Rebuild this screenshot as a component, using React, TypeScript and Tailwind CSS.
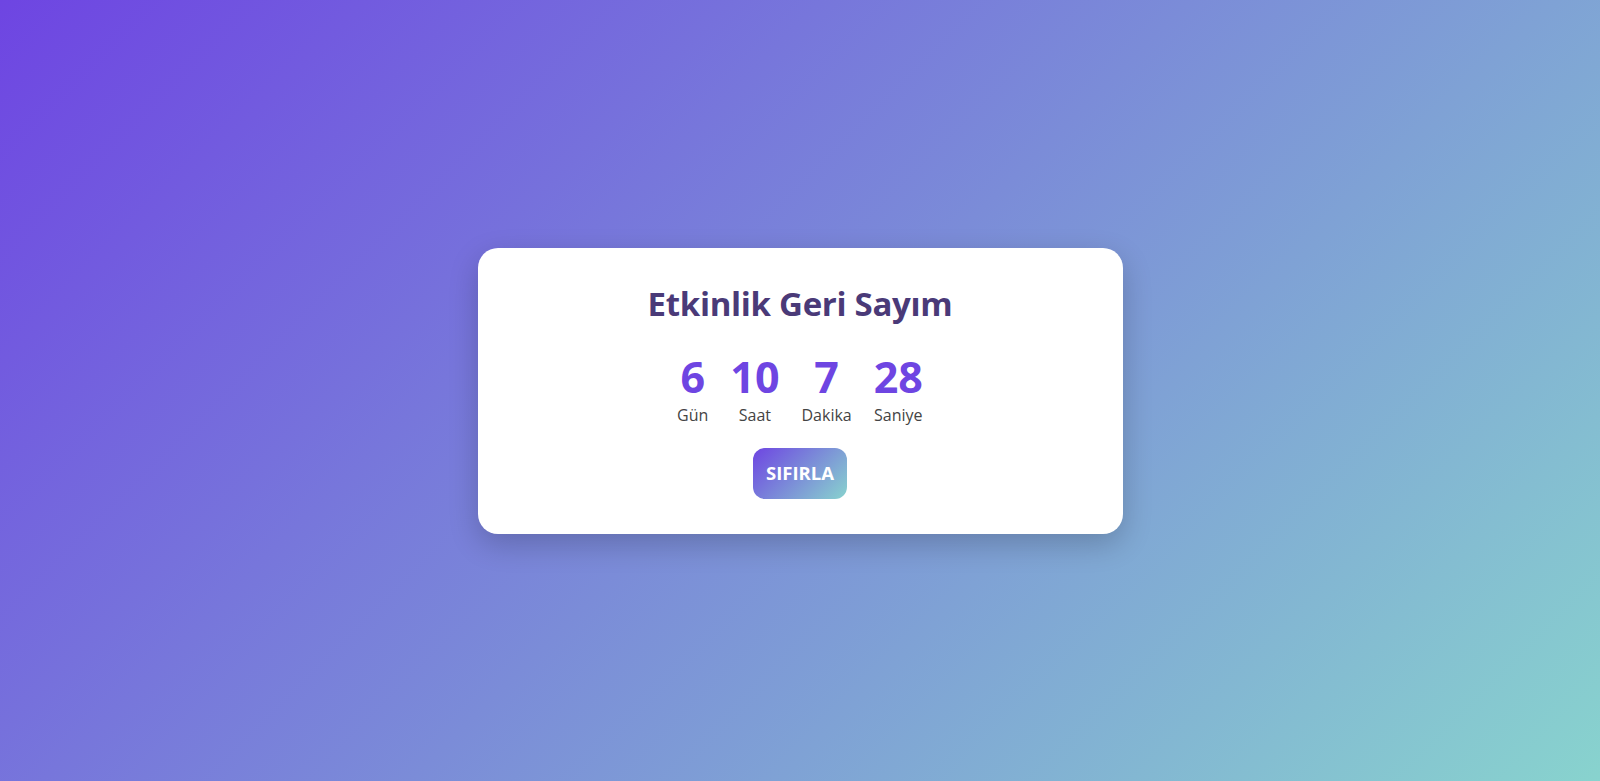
export default function App() {
    const units = [
        { value: 6, label: "Gün" },
        { value: 10, label: "Saat" },
        { value: 7, label: "Dakika" },
        { value: 28, label: "Saniye" },
    ];

    return (
        <div
            className="min-h-screen w-full flex items-center justify-center bg-[linear-gradient(135deg,#6e45e2,#88d3ce)]"
            style={{ fontFamily: '"Open Sans", "Noto Sans", sans-serif' }}
        >
            <div className="w-[645px] bg-white rounded-[20px] shadow-[0_10px_30px_rgba(0,0,0,0.2)] pt-[36px] pb-[35px] flex flex-col items-center">
                <h1 className="text-[33px] leading-[40px] font-bold text-[#4a3a78] tracking-[-0.3px]">Etkinlik Geri Sayım</h1>

                <div className="mt-[25px] flex gap-[22px]">
                    {units.map((u) => (
                        <div key={u.label} className="flex flex-col items-center">
                            <span className="text-[43px] leading-[55px] font-bold text-[#6e45e2]">{u.value}</span>
                            <span className="text-[16px] leading-[22px] text-[#444]">{u.label}</span>
                        </div>
                    ))}
                </div>

                <button className="mt-[22px] h-[51px] px-[13px] rounded-[12px] text-white font-bold text-[18.5px] bg-[linear-gradient(135deg,#6e45e2,#88d3ce)]">
                    SIFIRLA
                </button>
            </div>
        </div>
    );
}
